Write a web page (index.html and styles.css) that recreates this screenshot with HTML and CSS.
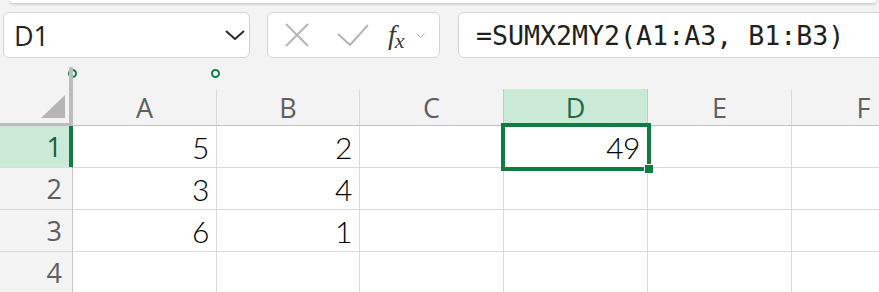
FILE: index.html
```html
<!DOCTYPE html>
<html lang="en">
<head>
  <meta charset="UTF-8" />
  <title>Hoja de cálculo - SUMX2MY2</title>
  <link rel="stylesheet" href="styles.css">
</head>
<body>

<div class="ribbon-edge"></div>

<div class="barra-formula">
  <div class="cuadro-nombre">
    <span class="nombre">D1</span>
    <svg class="flecha" width="20" height="10" viewBox="0 0 20 10">
      <polyline points="1,1 10,9 19,1" fill="none" stroke="#2b2b2b" stroke-width="2" />
    </svg>
  </div>

  <div class="botones-fx">
    <svg class="icono-x" width="24" height="24" viewBox="0 0 24 24">
      <line x1="1" y1="1" x2="23" y2="23" stroke="#b5b5b5" stroke-width="2" />
      <line x1="23" y1="1" x2="1" y2="23" stroke="#b5b5b5" stroke-width="2" />
    </svg>
    <svg class="icono-check" width="32" height="22" viewBox="0 0 32 22">
      <polyline points="1,10 13,21 31,1" fill="none" stroke="#b5b5b5" stroke-width="2" />
    </svg>
    <span class="fx">f<small>x</small></span>
    <svg class="fx-flecha" width="9" height="5" viewBox="0 0 9 5">
      <polyline points="0.5,0.5 4.5,4.5 8.5,0.5" fill="none" stroke="#b0b0b0" stroke-width="1" />
    </svg>
  </div>

  <div class="entrada-formula">=SUMX2MY2(A1:A3, B1:B3)</div>
</div>

<div class="tira">
  <span class="punto p1"></span>
  <span class="punto p2"></span>
  <div class="tira-borde"></div>
</div>

<div class="hoja">
  <div class="esquina"><span class="triangulo"></span></div>
  <div class="col-cab">A</div>
  <div class="col-cab">B</div>
  <div class="col-cab antes-activa">C</div>
  <div class="col-cab activa">D</div>
  <div class="col-cab">E</div>
  <div class="col-cab">F</div>

  <div class="fila-cab activa">1</div>
  <div class="celda">5</div>
  <div class="celda">2</div>
  <div class="celda"></div>
  <div class="celda seleccionada">49<span class="marco"><span class="relleno"></span></span></div>
  <div class="celda"></div>
  <div class="celda"></div>

  <div class="fila-cab">2</div>
  <div class="celda">3</div>
  <div class="celda">4</div>
  <div class="celda"></div>
  <div class="celda"></div>
  <div class="celda"></div>
  <div class="celda"></div>

  <div class="fila-cab">3</div>
  <div class="celda">6</div>
  <div class="celda">1</div>
  <div class="celda"></div>
  <div class="celda"></div>
  <div class="celda"></div>
  <div class="celda"></div>

  <div class="fila-cab">4</div>
  <div class="celda"></div>
  <div class="celda"></div>
  <div class="celda"></div>
  <div class="celda"></div>
  <div class="celda"></div>
  <div class="celda"></div>
</div>

</body>
</html>
```

FILE: styles.css
```css
body {
  margin: 0;
  font-family: 'Open Sans', 'Liberation Sans', sans-serif;
  background-color: #f3f3f3;
  overflow: hidden;
  width: 879px;
  height: 292px;
}

.ribbon-edge {
  height: 3px;
  margin: 0 3px 0 10px;
  background: #fff;
  border-radius: 0 0 8px 8px;
  box-shadow: 0 1px 3px rgba(0,0,0,0.25);
}

/* barra de formula */
.barra-formula {
  display: flex;
  align-items: stretch;
  height: 46px;
  margin: 9px -30px 0 3px;
}

.cuadro-nombre,
.botones-fx,
.entrada-formula {
  box-sizing: border-box;
  background: #fff;
  border: 1px solid #d4d4d4;
  border-radius: 6px;
}

.cuadro-nombre {
  width: 247px;
  display: flex;
  align-items: center;
  justify-content: space-between;
  padding: 0 4px 0 10px;
}

.nombre {
  font-size: 27px;
  color: #242424;
}

.botones-fx {
  width: 173px;
  margin-left: 17px;
  display: flex;
  align-items: center;
  padding-left: 17px;
}

.icono-check {
  margin-left: 28px;
}

.fx {
  margin-left: 19px;
  font-family: 'Liberation Serif', serif;
  font-style: italic;
  font-size: 28px;
  color: #3a3a3a;
  line-height: 1;
}

.fx small {
  font-size: 22px;
  position: relative;
  top: 4px;
  left: -1px;
}

.fx-flecha {
  margin-left: 10px;
}

.entrada-formula {
  flex: 1;
  margin-left: 18px;
  padding-left: 17px;
  display: flex;
  align-items: center;
  font-family: 'DejaVu Sans Mono', 'Liberation Mono', monospace;
  font-size: 26.6px;
  color: #1f1f1f;
}

/* tira con puntos */
.tira {
  position: relative;
  height: 31px;
  box-sizing: border-box;
  padding-top: 9px;
}

.tira-borde {
  position: relative;
  z-index: 1;
  box-sizing: border-box;
  width: 73px;
  height: 22px;
  border-right: 4px solid #bcbcbc;
}

.punto {
  position: absolute;
  top: 11px;
  width: 9px;
  height: 9px;
  box-sizing: border-box;
  border: 2px solid #107c41;
  border-radius: 50%;
  background: #fff;
}

.p1 { left: 68px; }
.p2 { left: 211px; }

/* hoja */
.hoja {
  display: grid;
  grid-template-columns: 73px 144px 143px 144px 144px 144px 144px;
  grid-template-rows: 37px 42px 42px 42px 42px;
  font-size: 27px;
}

.hoja > div {
  box-sizing: border-box;
}

.esquina {
  position: relative;
  border-right: 4px solid #bcbcbc;
  border-bottom: 3px solid #bcbcbc;
}

.triangulo {
  position: absolute;
  left: 41px;
  top: 6px;
  width: 0;
  height: 0;
  border-style: solid;
  border-width: 0 0 23px 24px;
  border-color: transparent transparent #b5b5b5 transparent;
}

.col-cab {
  display: flex;
  align-items: center;
  justify-content: center;
  color: #5f5f5f;
  border-right: 1px solid #dadada;
  border-bottom: 1px solid #c4c4c4;
}

.col-cab.antes-activa {
  border-right-color: #a6dcbb;
}

.col-cab.activa {
  background: #caead7;
  color: #1d6b3f;
  border-right-color: #a6dcbb;
}

.fila-cab {
  display: flex;
  align-items: center;
  justify-content: flex-end;
  padding-right: 10px;
  color: #5f5f5f;
  border-right: 1px solid #c6c6c6;
  border-bottom: 1px solid #dadada;
}

.fila-cab.activa {
  background: #caead7;
  color: #1b5e38;
  border-right-color: #107c41;
  box-shadow: inset -3px 0 0 #107c41;
}

.celda {
  position: relative;
  display: flex;
  align-items: center;
  justify-content: flex-end;
  padding-right: 7px;
  background: #fff;
  border-right: 1px solid #dadada;
  border-bottom: 1px solid #dadada;
  font-family: Lato, Roboto, 'Liberation Sans', sans-serif;
  font-weight: 300;
  font-size: 30px;
  letter-spacing: -0.5px;
  color: #000;
}

.celda.seleccionada {
  z-index: 2;
}

.marco {
  position: absolute;
  left: -3px;
  top: -3px;
  right: -4px;
  bottom: -4px;
  border: 4px solid #107c41;
}

.relleno {
  position: absolute;
  right: -6px;
  bottom: -6px;
  width: 8px;
  height: 8px;
  background: #107c41;
  box-shadow: 0 0 0 1px #fff;
}
```
